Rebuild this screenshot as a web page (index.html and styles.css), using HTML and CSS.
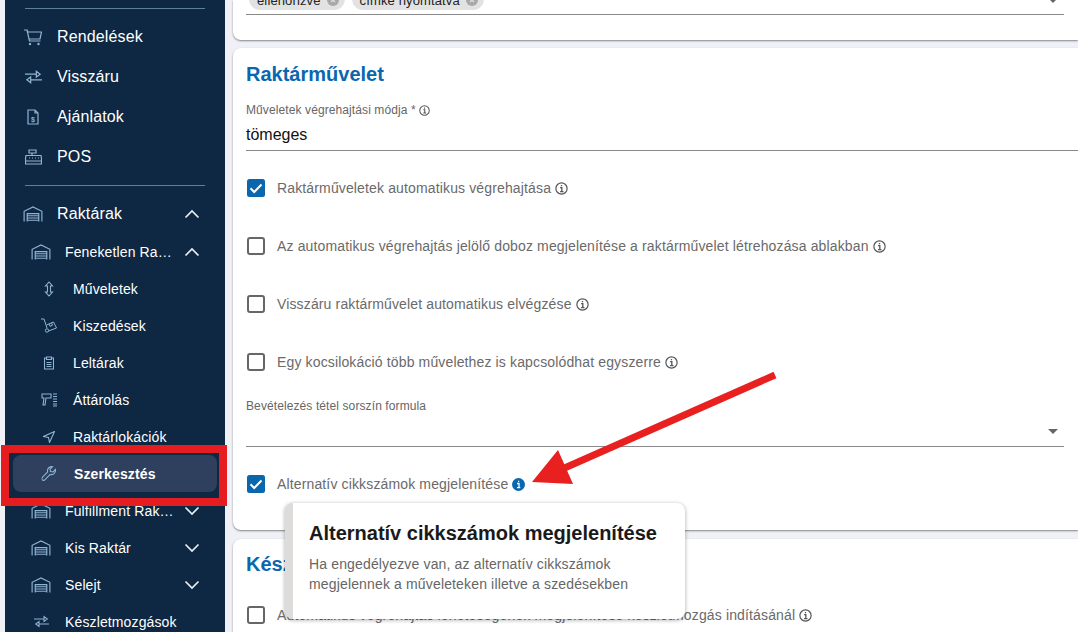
FILE: index.html
```html
<!DOCTYPE html>
<html lang="hu">
<head>
<meta charset="utf-8">
<title>Raktár szerkesztés</title>
<link rel="stylesheet" href="styles.css">
</head>
<body>
<svg class="defs" width="0" height="0" aria-hidden="true">
  <defs>
    <symbol id="wh" viewBox="0 0 22 18"><path d="M1 17.500V6L11 1l10 5v11.500M4.500 17.500V8.500h13v9M4.500 11h13M4.500 13.500h13M4.500 16h13" fill="none" stroke="currentColor" stroke-width="1.300"/></symbol>
    <symbol id="up" viewBox="0 0 16 10"><path d="M1.500 8.500 8 2l6.500 6.500" fill="none" stroke="currentColor" stroke-width="1.700"/></symbol>
    <symbol id="down" viewBox="0 0 16 10"><path d="M1.500 1.500 8 8l6.500-6.500" fill="none" stroke="currentColor" stroke-width="1.700"/></symbol>
    <symbol id="swap" viewBox="0 0 18 14"><path d="M0 4h12M12 1v6l4-3zM18 10H6M6 7v6l-4-3z" fill="none" stroke="currentColor" stroke-width="1.300"/></symbol>
    <symbol id="info" viewBox="0 0 12 12"><circle cx="6" cy="6" r="5.200" fill="none" stroke="currentColor" stroke-width="1.100"/><path d="M4.700 5.200H6.300V8.500M4.700 8.800h3.100M5.400 3.400h1.200" fill="none" stroke="currentColor" stroke-width="1.200"/></symbol>
    <symbol id="check" viewBox="0 0 18 18"><rect width="18" height="18" rx="2.500" fill="#0a66ad"/><path d="M3.500 9.300 7.200 13l7.300-7.500" fill="none" stroke="#fff" stroke-width="2"/></symbol>
  </defs>
</svg>
<div class="app">
  <nav class="sidebar">
    <hr class="sep">
    <a class="item top"><svg class="ic ic-cart" width="18" height="18" viewBox="0 0 18 18"><path d="M0 2h3l1 2h13.500l-1.500 7H5L3 2M5 11l.5 2h11" fill="none" stroke="currentColor" stroke-width="1.200"/><circle cx="6" cy="16" r="1.200" fill="currentColor"/><circle cx="14.500" cy="16" r="1.200" fill="currentColor"/></svg><span>Rendelések</span></a>
    <a class="item top"><svg class="ic" width="17" height="14"><use href="#swap"/></svg><span>Visszáru</span></a>
    <a class="item top"><svg class="ic ic-doc" width="12" height="16" viewBox="0 0 12 16"><path d="M1 1h7l3 3v11H1zM8 1v3h3" fill="none" stroke="currentColor" stroke-width="1.200"/><text x="6" y="12.500" font-size="7" font-weight="700" font-family="Liberation Sans" text-anchor="middle" fill="currentColor">$</text></svg><span>Ajánlatok</span></a>
    <a class="item top"><svg class="ic" width="17" height="16" viewBox="0 0 17 16"><path d="M4 1h7v3H4zM7 4v2M1 6.500h15l.5 3v5.500H.5V9.500zM1 12h15M4 9h1M7 9h1M10 9h1M13 9h1" fill="none" stroke="currentColor" stroke-width="1.200"/></svg><span>POS</span></a>
    <hr class="sep">
    <a class="item top sec"><svg class="ic ic-wh" width="20" height="16"><use href="#wh"/></svg><span>Raktárak</span><svg class="chev" width="16" height="10"><use href="#up"/></svg></a>
    <a class="item mid"><svg class="ic" width="20" height="16"><use href="#wh"/></svg><span class="clip">Feneketlen Raktár</span><svg class="chev" width="16" height="10"><use href="#up"/></svg></a>
    <a class="item sub"><svg class="ic" width="10" height="16" viewBox="0 0 10 16"><path d="M5 1 1.500 5H3.500V11H1.500L5 15l3.500-4H6.500V5H8.500z" fill="none" stroke="currentColor" stroke-width="1.100"/></svg><span>Műveletek</span></a>
    <a class="item sub"><svg class="ic" width="16" height="15" viewBox="0 0 16 15"><path d="M0 1h3l3 9M5.500 7l7-3 3 6-8 3M8 5.800l1 2.500 2.500-1-1-2.500" fill="none" stroke="currentColor" stroke-width="1"/><circle cx="6" cy="12.500" r="1.700" fill="none" stroke="currentColor"/></svg><span>Kiszedések</span></a>
    <a class="item sub"><svg class="ic" width="11" height="14" viewBox="0 0 11 14"><path d="M3 2H1v11h9V2H8M3 1h5v2.500H3zM3 6.500h5M3 8.500h5M3 10.500h5" fill="none" stroke="currentColor" stroke-width="1.100"/></svg><span>Leltárak</span></a>
    <a class="item sub"><svg class="ic" width="16" height="14" viewBox="0 0 16 14"><path d="M1 1h9v4H5L4 12H2l1-7H1zM12 1h4M12 3.500h4M12 6h4M12 8.500h4M12 11h4M12 13h4" fill="none" stroke="currentColor" stroke-width="1.100"/></svg><span>Áttárolás</span></a>
    <a class="item sub"><svg class="ic" width="12" height="12" viewBox="0 0 12 12"><path d="M11.500.5.500 5.500l5 1 1 5z" fill="none" stroke="currentColor" stroke-width="1.100"/></svg><span>Raktárlokációk</span></a>
    <a class="item sub active"><svg class="ic" width="15" height="15" viewBox="0 0 15 15"><path d="M14 3.500 11.500 6 9 5.500 8.500 3 11 .8C8.500.2 6 2 6 4.500c0 .5 0 1 .2 1.400L.8 11.300c-.7.700-.7 1.800 0 2.500s1.800.7 2.500 0l5.400-5.400c2.800 1 5.700-1.600 5.300-4.900z" fill="none" stroke="currentColor" stroke-width="1.100"/></svg><span>Szerkesztés</span></a>
    <a class="item mid"><svg class="ic" width="20" height="16"><use href="#wh"/></svg><span class="clip">Fulfillment Raktár</span><svg class="chev" width="16" height="10"><use href="#down"/></svg></a>
    <a class="item mid"><svg class="ic" width="20" height="16"><use href="#wh"/></svg><span class="clip">Kis Raktár</span><svg class="chev" width="16" height="10"><use href="#down"/></svg></a>
    <a class="item mid"><svg class="ic" width="20" height="16"><use href="#wh"/></svg><span class="clip">Selejt</span><svg class="chev" width="16" height="10"><use href="#down"/></svg></a>
    <a class="item mid"><svg class="ic ic-move" width="15" height="13"><use href="#swap"/></svg><span>Készletmozgások</span></a>
  </nav>
  <main class="main">
    <section class="card card-cut">
      <div class="chips">
        <span class="chip">ellenőrizve <svg class="x" width="12" height="12" viewBox="0 0 12 12"><circle cx="6" cy="6" r="6" fill="#a8a8a8"/><path d="M4 4l4 4M8 4l-4 4" stroke="#e2e2e2" stroke-width="1.200"/></svg></span>
        <span class="chip">címke nyomtatva <svg class="x" width="12" height="12" viewBox="0 0 12 12"><circle cx="6" cy="6" r="6" fill="#a8a8a8"/><path d="M4 4l4 4M8 4l-4 4" stroke="#e2e2e2" stroke-width="1.200"/></svg></span>
        <i class="caret caret-top"></i>
      </div>
    </section>
    <section class="card card-main">
      <h2 class="title">Raktárművelet</h2>
      <div class="field">
        <div class="label">Műveletek végrehajtási módja * <svg class="inf" width="11" height="11"><use href="#info"/></svg></div>
        <div class="value">tömeges</div>
      </div>
      <div class="cb first"><svg class="box" width="18" height="18"><use href="#check"/></svg><span>Raktárműveletek automatikus végrehajtása</span><svg class="inf" width="13" height="13"><use href="#info"/></svg></div>
      <div class="cb"><i class="box empty"></i><span>Az automatikus végrehajtás jelölő doboz megjelenítése a raktárművelet létrehozása ablakban</span><svg class="inf" width="13" height="13"><use href="#info"/></svg></div>
      <div class="cb"><i class="box empty"></i><span>Visszáru raktárművelet automatikus elvégzése</span><svg class="inf" width="13" height="13"><use href="#info"/></svg></div>
      <div class="cb"><i class="box empty"></i><span>Egy kocsilokáció több művelethez is kapcsolódhat egyszerre</span><svg class="inf" width="13" height="13"><use href="#info"/></svg></div>
      <div class="field select">
        <div class="label">Bevételezés tétel sorszín formula</div>
        <div class="value blank"><i class="caret"></i></div>
      </div>
      <div class="cb last"><svg class="box" width="18" height="18"><use href="#check"/></svg><span>Alternatív cikkszámok megjelenítése</span><svg class="inf act" width="13" height="13" viewBox="0 0 13 13"><circle cx="6.500" cy="6.500" r="6.500" fill="#0a66ad"/><path d="M5 5.500h2V9.500M5 9.700h3.300M6 3.400h1.200" fill="none" stroke="#fff" stroke-width="1.300"/></svg></div>
    </section>
    <section class="card card-next">
      <h2 class="title">Készlet</h2>
      <div class="cb"><i class="box empty"></i><span>Automatikus végrehajtás lehetőségének megjelenítése készletmozgás indításánál</span><svg class="inf" width="13" height="13"><use href="#info"/></svg></div>
    </section>
  </main>
</div>
<div class="tooltip">
  <h3>Alternatív cikkszámok megjelenítése</h3>
  <p>Ha engedélyezve van, az alternatív cikkszámok megjelennek a műveleteken illetve a szedésekben</p>
</div>
<div class="mark"></div>
<svg class="arrow" width="250" height="120" viewBox="0 0 250 120"><path d="M2 112 28 80 43 114z" fill="#e82020"/><path d="M245 5 30 100" stroke="#e82020" stroke-width="7" fill="none"/></svg>
</body>
</html>
```
FILE: styles.css
```css
* { box-sizing: border-box; }
html, body { margin: 0; height: 100%; overflow: hidden; }
body { font-family: "Liberation Sans", Arial, sans-serif; background: #fff; position: relative; width: 1078px; height: 632px; }
.defs { position: absolute; }
.app { display: flex; height: 632px; padding-left: 5px; overflow: hidden; background: #eff1f7; }

.sidebar { flex: 0 0 220px; height: 632px; background: #0e2743; padding-top: 8px; color: #fff; overflow: hidden; }
.sep { margin: 0 20px; border: 0; border-top: 1px solid #5d7f9b; height: 1px; }
.item { display: flex; align-items: center; position: relative; color: #fff; letter-spacing: .13px; }
.ic { position: absolute; color: #8fb4d2; }
.chev { position: absolute; left: 179px; color: #e8eef4; }
.top { height: 40px; padding-left: 52px; font-size: 16px; }
.top .ic { left: 20px; }
.top .ic-cart { left: 19px; }
.top .ic-doc { left: 22px; }
.top .ic-wh { left: 18px; }
.top + .sep { margin-top: 8px; }
.sep + .top { margin-top: 8px; }
.sep + .sec { margin-top: 8px; height: 39px; }
.mid { height: 37px; padding-left: 60px; font-size: 14px; }
.mid .ic { left: 26px; }
.mid .ic-move { left: 29px; }
.clip { width: 110px; white-space: nowrap; overflow: hidden; text-overflow: ellipsis; }
.sub { height: 37px; padding-left: 68px; font-size: 14px; }
.sub .ic { left: 44px; transform: translateX(-50%); }
.active { margin: 0 8px; padding-left: 61px; border-radius: 8px; background: #2f3f5e; font-weight: 700; height: 37px; }
.active .ic { left: 36px; }

.main { flex: 1; min-width: 0; padding-left: 8px; }
.card { background: #fff; border-radius: 8px 0 0 8px; box-shadow: 0 1px 2px rgba(0,0,0,.45); padding-left: 13px; position: relative; overflow: hidden; }
.card-cut { height: 40px; margin-bottom: 8px; border-radius: 0 0 0 8px; }
.chips { height: 15px; border-bottom: 1px solid #8a8a8a; margin-right: 14px; display: flex; align-items: flex-end; gap: 7px; padding-left: 3px; padding-bottom: 5px; position: relative; }
.chip { display: inline-flex; align-items: center; gap: 6px; height: 22px; margin-bottom: -1px; padding: 2px 6px 0 8px; border-radius: 11px; background: #e2e2e2; color: #222; font-size: 13px; letter-spacing: .13px; }
.x { flex: none; }
.card-main { height: 482px; padding-top: 15px; }
.card-next { height: 100px; margin-top: 9px; padding-top: 14px; }
.card-next .cb { margin-top: 10px; }
.title { margin: 0; font-size: 20px; line-height: 23px; font-weight: 700; color: #0a66ad; }
.field { margin-top: 17px; }
.label { font-size: 12px; line-height: 14px; color: #666; display: flex; align-items: center; gap: 3px; letter-spacing: .1px; }
.value { height: 34px; padding-top: 8px; font-size: 16px; line-height: 20px; color: #111; border-bottom: 1px solid #8a8a8a; }
.cb { display: flex; align-items: center; height: 58px; font-size: 14px; color: #6a6a6a; letter-spacing: .14px; }
.cb span { margin-right: 4px; }
.first { margin-top: 8px; }
.box { flex: none; width: 18px; height: 18px; margin-left: 1px; margin-right: 12px; }
.empty { display: block; border: 2px solid #666; border-radius: 3px; }
.inf { color: #555; flex: none; }
.select { margin-top: 8px; margin-right: 14px; }
.select .value { position: relative; }
.caret { position: absolute; right: 6px; top: 16px; border: 5px solid transparent; border-top: 5px solid #666; border-bottom: 0; }
.caret-top { top: -2px; right: 6px; }
.last { height: 36px; margin-top: 19px; }

.tooltip { position: absolute; left: 285px; top: 503px; width: 400px; height: 116px; background: #fff; border-left: 8px solid #dedbdb; border-radius: 8px; box-shadow: 0 1px 4px rgba(0,0,0,.35); padding: 19px 0 0 16px; }
.tooltip h3 { margin: 0; font-size: 20px; line-height: 22px; font-weight: 700; color: #1a1a1a; }
.tooltip p { margin: 10px 0 0; width: 345px; font-size: 14px; line-height: 20px; color: #666; letter-spacing: .15px; }
.mark { position: absolute; left: 1px; top: 445px; width: 226px; height: 61px; border: 8px solid #e51c20; }
.arrow { position: absolute; left: 530px; top: 370px; }
```
